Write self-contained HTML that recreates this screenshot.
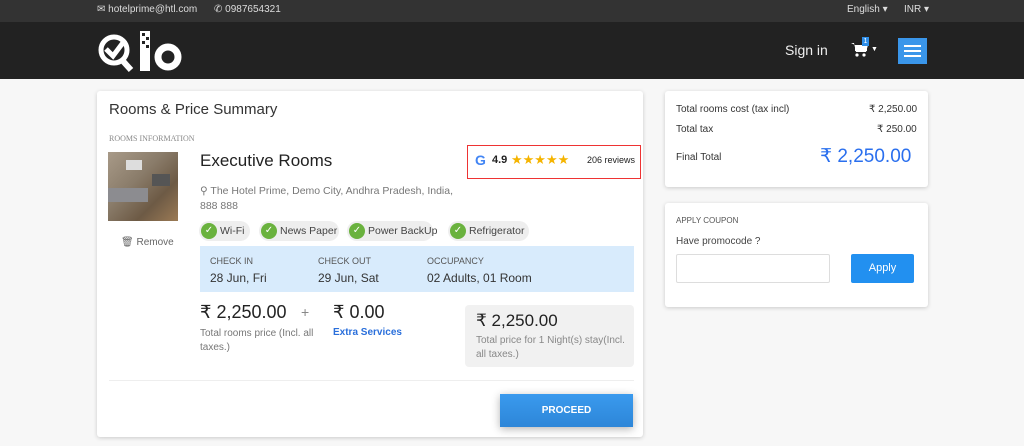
<!DOCTYPE html>
<html><head><meta charset="utf-8"><style>
*{box-sizing:border-box;margin:0;padding:0}
body{width:1024px;height:446px;overflow:hidden;background:#f7f7f7;font-family:"Liberation Sans",sans-serif;color:#333;position:relative}
.a{position:absolute}
.card{position:absolute;background:#fff;border-radius:3px;box-shadow:0 1px 4px rgba(0,0,0,.18)}
.chip{position:absolute;top:221px;height:20px;background:#eee;border-radius:10px;font-size:10.5px;color:#444;line-height:20px;padding-left:21px;white-space:nowrap}
.chip i{position:absolute;left:2px;top:2px;width:16px;height:16px;border-radius:50%;background:#6ab23e;color:#fff;font-style:normal;font-size:10px;line-height:16px;text-align:center}
.lbl{font-size:9px;color:#555}
.val{font-size:12px;color:#333}
.star{color:#f5b400;font-size:13px;letter-spacing:0}
</style></head><body>
<div class="a" style="left:0;top:0;width:1024px;height:22px;background:#333"></div>
<div class="a" style="left:0;top:22px;width:1024px;height:57px;background:#222"></div>
<div class="a" style="left:97px;top:4px;font-size:10px;color:#ddd">✉ hotelprime@htl.com</div>
<div class="a" style="left:214px;top:4px;font-size:10px;color:#ddd">✆ 0987654321</div>
<div class="a" style="left:847px;top:4px;font-size:10px;color:#ddd">English ▾</div>
<div class="a" style="left:904px;top:4px;font-size:10px;color:#ddd">INR ▾</div>
<svg class="a" style="left:97px;top:28px" width="90" height="46" viewBox="0 0 90 46">
<circle cx="17" cy="22" r="13" fill="none" stroke="#fff" stroke-width="5"/>
<path d="M9 21 L16 28 L28 12" fill="none" stroke="#fff" stroke-width="5"/>
<path d="M25 32 L34 42" stroke="#fff" stroke-width="6"/>
<rect x="43" y="3" width="10" height="40" fill="#fff"/>
<rect x="45" y="5" width="3" height="3" fill="#222"/><rect x="49" y="9" width="3" height="3" fill="#222"/><rect x="45" y="13" width="3" height="3" fill="#222"/><rect x="49" y="17" width="3" height="3" fill="#222"/>
<circle cx="71" cy="29" r="10" fill="none" stroke="#fff" stroke-width="7"/>
</svg>
<div class="a" style="left:785px;top:42px;font-size:14px;color:#eee">Sign in</div>
<svg class="a" style="left:851px;top:42px" width="18" height="16" viewBox="0 0 18 16"><path d="M0 1h3l2 9h10l2-7H4" fill="#fff"/><rect x="4" y="3" width="12" height="6" fill="#fff"/><circle cx="6" cy="13" r="1.6" fill="#fff"/><circle cx="13" cy="13" r="1.6" fill="#fff"/></svg>
<div class="a" style="left:862px;top:37px;width:7px;height:9px;background:#2e8ee8;color:#fff;font-size:7px;text-align:center;line-height:9px">1</div>
<div class="a" style="left:871px;top:46px;font-size:7px;color:#fff">▼</div>
<div class="a" style="left:898px;top:38px;width:29px;height:26px;background:#3a96ea;padding:7px 6px">
<div style="height:2px;background:#fff;margin-bottom:3px"></div><div style="height:2px;background:#fff;margin-bottom:3px"></div><div style="height:2px;background:#fff"></div></div>

<div class="card" style="left:97px;top:91px;width:546px;height:346px"></div>
<div class="a" style="left:109px;top:101px;font-size:15px;color:#333">Rooms &amp; Price Summary</div>
<div class="a" style="left:109px;top:134px;font-size:8px;color:#888;font-family:'Liberation Serif',serif">ROOMS INFORMATION</div>
<div class="a" style="left:108px;top:152px;width:70px;height:69px;background:linear-gradient(135deg,#a89a88 0%,#8a7c6a 40%,#6d5a45 70%,#9b7a55 100%)">
<div style="position:absolute;left:18px;top:8px;width:16px;height:10px;background:#ddd"></div>
<div style="position:absolute;left:0;top:36px;width:40px;height:14px;background:#8c8c90"></div>
<div style="position:absolute;left:44px;top:22px;width:18px;height:12px;background:#555"></div></div>
<div class="a" style="left:121px;top:237px;font-size:10px;color:#666">🗑︎ Remove</div>
<div class="a" style="left:200px;top:151px;font-size:17px;color:#222">Executive Rooms</div>
<div class="a" style="left:200px;top:184px;width:262px;font-size:10.5px;color:#777;line-height:15px">&#9906; The Hotel Prime, Demo City, Andhra Pradesh, India, 888 888</div>
<div class="a" style="left:467px;top:145px;width:174px;height:34px;border:1px solid #e33;background:#fff"></div>
<div class="a" style="left:475px;top:152px;font-size:14px;font-weight:bold;color:#4285f4">G</div>
<div class="a" style="left:492px;top:154px;font-size:11px;font-weight:bold;color:#222">4.9</div>
<div class="a star" style="left:511px;top:152px">★★★★★</div>
<div class="a" style="left:587px;top:155px;font-size:9px;color:#222">206 reviews</div>
<div class="chip" style="left:199px;width:51px"><i>✓</i>Wi-Fi</div>
<div class="chip" style="left:259px;width:80px"><i>✓</i>News Paper</div>
<div class="chip" style="left:347px;width:86px"><i>✓</i>Power BackUp</div>
<div class="chip" style="left:448px;width:81px"><i>✓</i>Refrigerator</div>
<div class="a" style="left:200px;top:246px;width:434px;height:46px;background:#d8ebfc"></div>
<div class="a lbl" style="left:210px;top:256px">CHECK IN</div>
<div class="a lbl" style="left:318px;top:256px">CHECK OUT</div>
<div class="a lbl" style="left:427px;top:256px">OCCUPANCY</div>
<div class="a val" style="left:210px;top:271px">28 Jun, Fri</div>
<div class="a val" style="left:318px;top:271px">29 Jun, Sat</div>
<div class="a val" style="left:427px;top:271px">02 Adults, 01 Room</div>
<div class="a" style="left:200px;top:302px;font-size:18px;color:#222">₹ 2,250.00</div>
<div class="a" style="left:200px;top:327px;width:120px;font-size:10px;color:#777;line-height:14px">Total rooms price (Incl. all taxes.)</div>
<div class="a" style="left:301px;top:304px;font-size:14px;color:#888">+</div>
<div class="a" style="left:333px;top:302px;font-size:18px;color:#222">₹ 0.00</div>
<div class="a" style="left:333px;top:327px;font-size:10px;color:#2a6fdb;font-weight:bold">Extra Services</div>
<div class="a" style="left:465px;top:305px;width:169px;height:62px;background:#f1f1f1;border-radius:4px"></div>
<div class="a" style="left:476px;top:311px;font-size:17px;color:#222">₹ 2,250.00</div>
<div class="a" style="left:476px;top:334px;width:155px;font-size:10px;color:#888;line-height:14px">Total price for 1 Night(s) stay(Incl. all taxes.)</div>
<div class="a" style="left:109px;top:380px;width:525px;height:1px;background:#eee"></div>
<div class="a" style="left:500px;top:394px;width:133px;height:33px;background:linear-gradient(#3a9aee,#2d86d8);color:#fff;font-size:10px;font-weight:bold;text-align:center;line-height:33px;box-shadow:0 2px 8px rgba(0,0,0,.3)">PROCEED</div>

<div class="card" style="left:665px;top:91px;width:263px;height:96px"></div>
<div class="a" style="left:676px;top:104px;font-size:10px;color:#333">Total rooms cost (tax incl)</div>
<div class="a" style="left:869px;top:104px;font-size:10px;color:#333">₹ 2,250.00</div>
<div class="a" style="left:676px;top:124px;font-size:10px;color:#333">Total tax</div>
<div class="a" style="left:877px;top:124px;font-size:10px;color:#333">₹ 250.00</div>
<div class="a" style="left:676px;top:152px;font-size:10px;color:#333">Final Total</div>
<div class="a" style="left:820px;top:145px;font-size:19px;color:#2a6fee">₹ 2,250.00</div>

<div class="card" style="left:665px;top:203px;width:263px;height:104px"></div>
<div class="a" style="left:676px;top:216px;font-size:8px;color:#555">APPLY COUPON</div>
<div class="a" style="left:676px;top:236px;font-size:10px;color:#444">Have promocode ?</div>
<div class="a" style="left:676px;top:254px;width:154px;height:29px;border:1px solid #ddd;border-radius:2px;background:#fff"></div>
<div class="a" style="left:851px;top:254px;width:63px;height:29px;background:#2290f0;border-radius:2px;color:#fff;font-size:11px;text-align:center;line-height:29px">Apply</div>
</body></html>
